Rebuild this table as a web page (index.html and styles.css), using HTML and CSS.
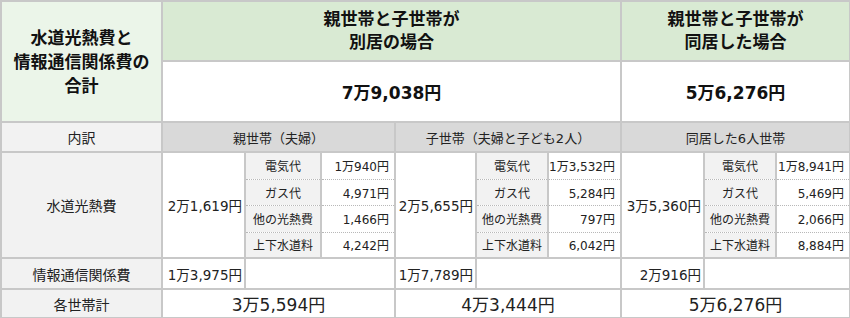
FILE: index.html
```html
<!DOCTYPE html>
<html lang="ja">
<head>
    <meta charset="UTF-8">
    <meta name="viewport" content="width=device-width, initial-scale=1.0">
    <title>水道光熱費と情報通信関係費の合計</title>
    <link rel="stylesheet" href="styles.css">
</head>
<body>
    <table class="cost-table">
        <colgroup>
            <col class="c-label">
            <col class="c-total"><col class="c-sublab"><col class="c-subval">
            <col class="c-total2"><col class="c-sublab2"><col class="c-subval2">
            <col class="c-total"><col class="c-sublab2"><col class="c-subval">
        </colgroup>
        <tr class="row-head">
            <th class="corner" rowspan="2">水道光熱費と<br>情報通信関係費の<br>合計</th>
            <th class="case" colspan="6">親世帯と子世帯が<br>別居の場合</th>
            <th class="case" colspan="3">親世帯と子世帯が<br>同居した場合</th>
        </tr>
        <tr class="row-sum">
            <td class="sum" colspan="6">7万9,038円</td>
            <td class="sum" colspan="3">5万6,276円</td>
        </tr>
        <tr class="row-breakdown">
            <td class="rowname">内訳</td>
            <td class="house" colspan="3">親世帯（夫婦）</td>
            <td class="house" colspan="3">子世帯（夫婦と子ども2人）</td>
            <td class="house" colspan="3">同居した6人世帯</td>
        </tr>
        <tr class="sub sub-1">
            <td class="rowname" rowspan="4">水道光熱費</td>
            <td class="total" rowspan="4">2万1,619円</td>
            <td class="lab">電気代</td><td class="val">1万940円</td>
            <td class="total" rowspan="4">2万5,655円</td>
            <td class="lab">電気代</td><td class="val">1万3,532円</td>
            <td class="total" rowspan="4">3万5,360円</td>
            <td class="lab">電気代</td><td class="val">1万8,941円</td>
        </tr>
        <tr class="sub sub-2">
            <td class="lab">ガス代</td><td class="val">4,971円</td>
            <td class="lab">ガス代</td><td class="val">5,284円</td>
            <td class="lab">ガス代</td><td class="val">5,469円</td>
        </tr>
        <tr class="sub sub-3">
            <td class="lab">他の光熱費</td><td class="val">1,466円</td>
            <td class="lab">他の光熱費</td><td class="val">797円</td>
            <td class="lab">他の光熱費</td><td class="val">2,066円</td>
        </tr>
        <tr class="sub sub-4">
            <td class="lab">上下水道料</td><td class="val">4,242円</td>
            <td class="lab">上下水道料</td><td class="val">6,042円</td>
            <td class="lab">上下水道料</td><td class="val">8,884円</td>
        </tr>
        <tr class="row-info">
            <td class="rowname">情報通信関係費</td>
            <td class="total">1万3,975円</td><td colspan="2"></td>
            <td class="total">1万7,789円</td><td colspan="2"></td>
            <td class="total">2万916円</td><td colspan="2"></td>
        </tr>
        <tr class="row-grand">
            <td class="rowname">各世帯計</td>
            <td class="grand" colspan="3">3万5,594円</td>
            <td class="grand" colspan="3">4万3,444円</td>
            <td class="grand" colspan="3">5万6,276円</td>
        </tr>
    </table>
</body>
</html>
```

FILE: styles.css
```css
body {
    margin: 0;
    background: #fff;
    font-family: 'DejaVu Sans', 'Noto Sans CJK JP', sans-serif;
    color: #222;
}

.cost-table {
    width: 850px;
    table-layout: fixed;
    border-collapse: collapse;
}

.c-label { width: 161px; }
.c-total { width: 83px; }
.c-sublab { width: 76px; }
.c-subval { width: 74px; }
.c-total2 { width: 81px; }
.c-sublab2 { width: 72px; }
.c-subval2 { width: 73px; }

.cost-table th,
.cost-table td {
    border: 2px solid #c8c8c8;
    padding: 0;
    text-align: center;
    vertical-align: middle;
    white-space: nowrap;
    overflow: hidden;
}

/* header rows */
.row-head { height: 60px; }
.row-sum { height: 61px; }

.corner {
    background: #ebf5e9;
    font-size: 17px;
    line-height: 24px;
    font-weight: bold;
    color: #111;
}

.case {
    background: #d9ead3;
    font-size: 17px;
    line-height: 23px;
    font-weight: bold;
    color: #111;
}

.sum {
    background: #fff;
    font-size: 17px;
    font-weight: bold;
    color: #111;
}

/* breakdown */
.row-breakdown { height: 30px; }

.rowname {
    background: #f2f2f2;
    font-size: 14px;
}

.house {
    background: #d9d9d9;
    font-size: 13px;
}

.sub { height: 26px; }
.sub-1, .sub-3 { height: 27px; }

.total {
    text-align: right !important;
    padding-right: 2px !important;
    font-size: 13.5px;
}

.lab,
.val {
    font-size: 12px;
    border-top: 1px dotted #b8b8b8 !important;
    border-bottom: 1px dotted #b8b8b8 !important;
}

.sub-1 .lab, .sub-1 .val { border-top: 2px solid #c8c8c8 !important; }
.sub-4 .lab, .sub-4 .val { border-bottom: 2px solid #c8c8c8 !important; }

.lab {
    background: #f2f2f2;
}

.val {
    text-align: right !important;
    padding-right: 5px !important;
}

.row-info { height: 31px; }
.row-grand { height: 29px; }

.grand {
    font-size: 17px;
}
```
